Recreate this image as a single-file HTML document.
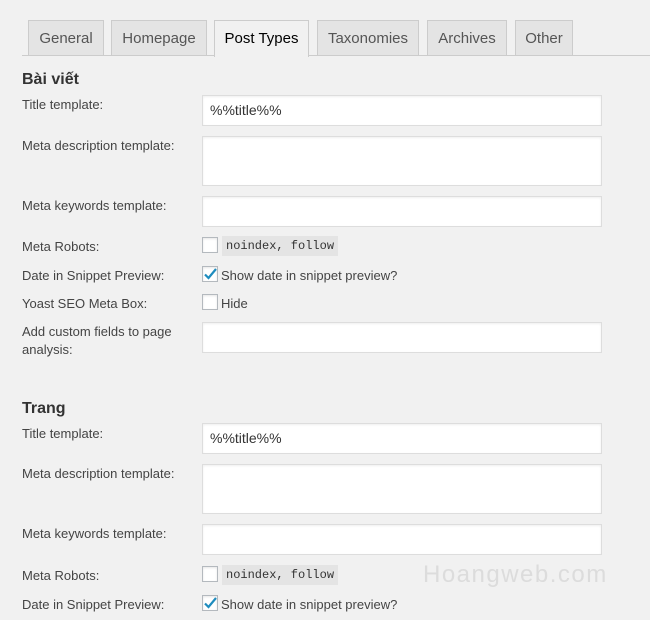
<!DOCTYPE html>
<html><head><meta charset="utf-8"><style>
*{box-sizing:border-box;margin:0;padding:0}
body{width:650px;height:620px;background:#f1f1f1;font-family:"Liberation Sans",sans-serif;font-size:13px;color:#444;position:relative;overflow:hidden}
.a{position:absolute}
.tab{position:absolute;top:20px;height:36px;background:#e4e4e4;border:1px solid #ccc;border-bottom:none;font-size:15px;color:#555;text-align:center;line-height:35px}
.tab.on{background:#f1f1f1;color:#000;height:37px;z-index:2}
.line{position:absolute;left:22px;right:0;top:55px;border-top:1px solid #ccc}
.h{position:absolute;left:22px;font-size:16px;font-weight:bold;color:#333}
.lb{position:absolute;left:22px;width:175px;line-height:18px;color:#444}
.in{position:absolute;left:202px;width:400px;background:#fff;border:1px solid #ddd;box-shadow:inset 0 1px 2px rgba(0,0,0,.07);font-size:14px;padding-left:7px;line-height:29px;color:#333}
.cb{position:absolute;left:202px;width:16px;height:16px;background:#fff;border:1px solid #b4b9be;box-shadow:inset 0 1px 2px rgba(0,0,0,.1)}
.code{position:absolute;left:222px;height:20px;background:#e4e4e4;font-family:"Liberation Mono",monospace;font-size:12px;padding:0 4px;line-height:20px;color:#333}
.ct{position:absolute;left:221px;color:#444;line-height:18px}
</style></head><body>
<div class="tab" style="left:28px;width:76px">General</div>
<div class="tab" style="left:111px;width:96px">Homepage</div>
<div class="tab on" style="left:214px;width:95px">Post Types</div>
<div class="tab" style="left:317px;width:102px">Taxonomies</div>
<div class="tab" style="left:427px;width:80px">Archives</div>
<div class="tab" style="left:515px;width:58px">Other</div>
<div class="line"></div>

<div class="h" style="top:71px">Bài viết</div>
<div class="lb" style="top:96px">Title template:</div>
<div class="in" style="top:95px;height:31px">%%title%%</div>
<div class="lb" style="top:137px">Meta description template:</div>
<div class="in" style="top:136px;height:50px"></div>
<div class="lb" style="top:197px">Meta keywords template:</div>
<div class="in" style="top:196px;height:31px"></div>
<div class="lb" style="top:238px">Meta Robots:</div>
<div class="cb" style="top:237px"></div>
<div class="code" style="top:236px">noindex, follow</div>
<div class="lb" style="top:267px">Date in Snippet Preview:</div>
<div class="cb" style="top:266px"><svg width="16" height="16" style="position:absolute;left:-1px;top:-1px"><path d="M3 8.5l3.5 3.5L14 3" stroke="#1e8cbe" stroke-width="2.2" fill="none"/></svg></div>
<div class="ct" style="top:267px">Show date in snippet preview?</div>
<div class="lb" style="top:295px">Yoast SEO Meta Box:</div>
<div class="cb" style="top:294px"></div>
<div class="ct" style="top:295px">Hide</div>
<div class="lb" style="top:323px">Add custom fields to page analysis:</div>
<div class="in" style="top:322px;height:31px"></div>

<div class="h" style="top:400px">Trang</div>
<div class="lb" style="top:425px">Title template:</div>
<div class="in" style="top:423px;height:31px">%%title%%</div>
<div class="lb" style="top:465px">Meta description template:</div>
<div class="in" style="top:464px;height:50px"></div>
<div class="lb" style="top:525px">Meta keywords template:</div>
<div class="in" style="top:524px;height:31px"></div>
<div class="lb" style="top:567px">Meta Robots:</div>
<div class="cb" style="top:566px"></div>
<div class="code" style="top:565px">noindex, follow</div>
<div class="lb" style="top:596px">Date in Snippet Preview:</div>
<div class="cb" style="top:595px"><svg width="16" height="16" style="position:absolute;left:-1px;top:-1px"><path d="M3 8.5l3.5 3.5L14 3" stroke="#1e8cbe" stroke-width="2.2" fill="none"/></svg></div>
<div class="ct" style="top:596px">Show date in snippet preview?</div>
<div class="a" style="left:423px;top:561px;font-size:24px;color:#dcdcdc;letter-spacing:1.5px">Hoangweb.com</div>
</body></html>
